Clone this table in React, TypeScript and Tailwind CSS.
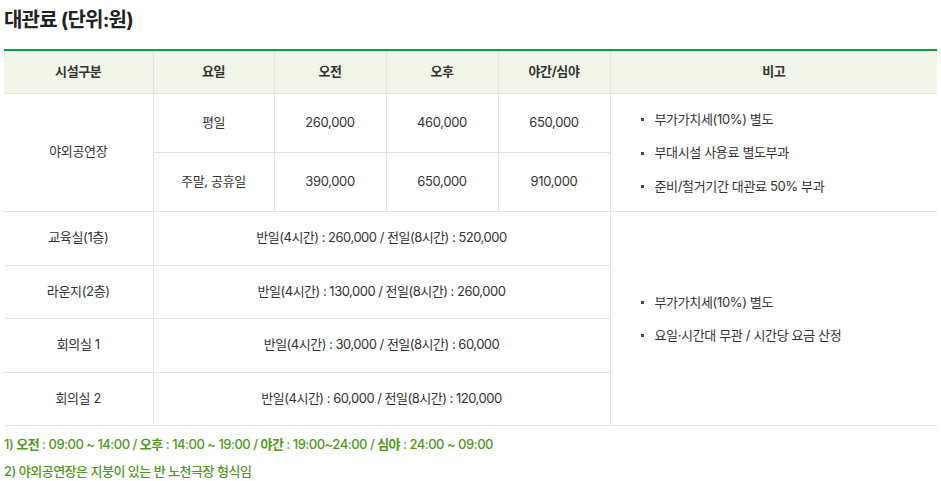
import React from "react";

const font = { fontFamily: '"Inter", "Noto Sans CJK KR", sans-serif' };

function Bullets({ items }: { items: string[] }) {
  return (
    <ul className="flex flex-col gap-[14px] pl-[30px] text-left">
      {items.map((t) => (
        <li key={t} className="flex items-center gap-[11px]">
          <span className="w-[3px] h-[3px] bg-[#444] shrink-0" />
          <span>{t}</span>
        </li>
      ))}
    </ul>
  );
}

export default function App() {
  const td = "border border-[#e3e3e3] text-center align-middle";
  const rooms = [
    { name: "교육실(1층)", price: "반일(4시간) : 260,000 / 전일(8시간) : 520,000", h: "h-[54px]" },
    { name: "라운지(2층)", price: "반일(4시간) : 130,000 / 전일(8시간) : 260,000", h: "h-[53px]" },
    { name: "회의실 1", price: "반일(4시간) : 30,000 / 전일(8시간) : 60,000", h: "h-[54px]" },
    { name: "회의실 2", price: "반일(4시간) : 60,000 / 전일(8시간) : 120,000", h: "h-[53px]" },
  ];

  return (
    <div className="w-[941px] h-[481px] bg-white px-[4px] pt-[8px] text-[13px] text-[#333] tracking-[-0.35px]" style={font}>
      <h2 className="text-[20px] font-bold text-[#222] tracking-[-0.8px] leading-[24px]">대관료 (단위:원)</h2>

      <table className="mt-[17px] w-[933px] table-fixed border-collapse border-t-2 border-t-[#0c9f3c]">
        <colgroup>
          <col className="w-[149px]" />
          <col className="w-[121px]" />
          <col className="w-[112px]" />
          <col className="w-[112px]" />
          <col className="w-[112px]" />
          <col />
        </colgroup>
        <thead>
          <tr className="h-[43px] bg-[#f1f6e9] font-semibold text-[#333]">
            <th className={`${td} border-l-0 border-t-0`}>시설구분</th>
            <th className={`${td} border-t-0`}>요일</th>
            <th className={`${td} border-t-0`}>오전</th>
            <th className={`${td} border-t-0`}>오후</th>
            <th className={`${td} border-t-0`}>야간/심야</th>
            <th className={`${td} border-r-0 border-t-0`}>비고</th>
          </tr>
        </thead>
        <tbody>
          <tr className="h-[59px]">
            <td className={`${td} border-l-0`} rowSpan={2}>야외공연장</td>
            <td className={td}>평일</td>
            <td className={td}>260,000</td>
            <td className={td}>460,000</td>
            <td className={td}>650,000</td>
            <td className={`${td} border-r-0 pt-[2px]`} rowSpan={2}>
              <Bullets items={["부가가치세(10%) 별도", "부대시설 사용료 별도부과", "준비/철거기간 대관료 50% 부과"]} />
            </td>
          </tr>
          <tr className="h-[59px]">
            <td className={td}>주말, 공휴일</td>
            <td className={td}>390,000</td>
            <td className={td}>650,000</td>
            <td className={td}>910,000</td>
          </tr>
          {rooms.map((r, i) => (
            <tr key={r.name} className={r.h}>
              <td className={`${td} border-l-0`}>{r.name}</td>
              <td className={`${td} tracking-[-0.5px]`} colSpan={4}>{r.price}</td>
              {i === 0 && (
                <td className={`${td} border-r-0 pt-[2px]`} rowSpan={4}>
                  <Bullets items={["부가가치세(10%) 별도", "요일·시간대 무관 / 시간당 요금 산정"]} />
                </td>
              )}
            </tr>
          ))}
        </tbody>
      </table>

      <div className="mt-[9px] flex flex-col gap-[9px] text-[13px] font-medium text-[#4f9a1c] leading-[18px] tracking-[-0.5px]">
        <p>
          1) <b className="font-bold">오전</b> : 09:00 ~ 14:00 / <b className="font-bold">오후</b> : 14:00 ~ 19:00 /{" "}
          <b className="font-bold">야간</b> : 19:00~24:00 / <b className="font-bold">심야</b> : 24:00 ~ 09:00
        </p>
        <p>2) 야외공연장은 지붕이 있는 반 노천극장 형식임</p>
      </div>
    </div>
  );
}
